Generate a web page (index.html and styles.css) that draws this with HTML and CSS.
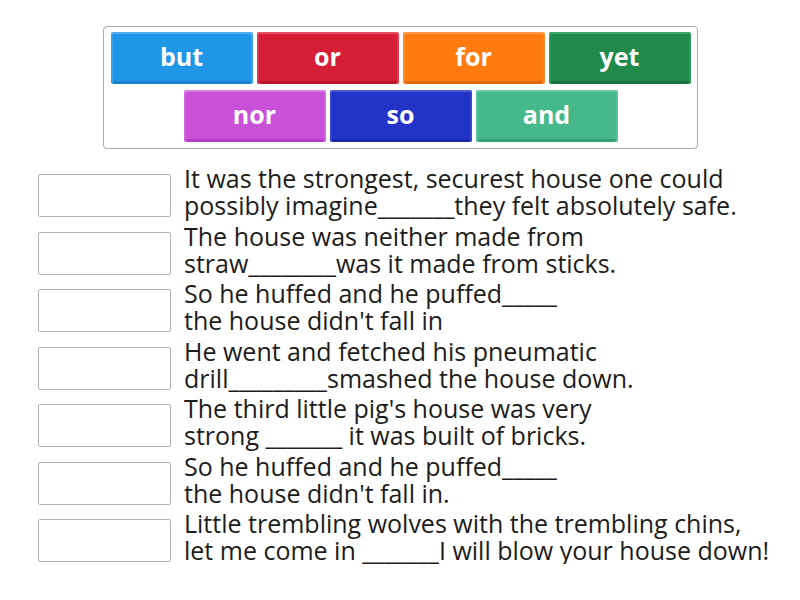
FILE: index.html
```html
<!DOCTYPE html>
<html>
<head>
<meta charset="utf-8">
<link rel="stylesheet" href="styles.css">
</head>
<body>
<div class="bank">
  <div class="tile blue">but</div>
  <div class="tile red">or</div>
  <div class="tile orange">for</div>
  <div class="tile green">yet</div>
  <div class="tile purple">nor</div>
  <div class="tile navy">so</div>
  <div class="tile teal">and</div>
</div>
<div class="rows">
  <div class="row"><div class="slot"></div><div class="text">It was the strongest, securest house one could<br>possibly imagine_______they felt absolutely safe.</div></div>
  <div class="row"><div class="slot"></div><div class="text">The house was neither made from<br>straw________was it made from sticks.</div></div>
  <div class="row"><div class="slot"></div><div class="text">So he huffed and he puffed_____<br>the house didn't fall in</div></div>
  <div class="row"><div class="slot"></div><div class="text">He went and fetched his pneumatic<br>drill_________smashed the house down.</div></div>
  <div class="row"><div class="slot"></div><div class="text">The third little pig's house was very<br>strong _______ it was built of bricks.</div></div>
  <div class="row"><div class="slot"></div><div class="text">So he huffed and he puffed_____<br>the house didn't fall in.</div></div>
  <div class="row"><div class="slot"></div><div class="text">Little trembling wolves with the trembling chins,<br>let me come in _______I will blow your house down!</div></div>
</div>
</body>
</html>
```
FILE: styles.css
```css
html, body {
  margin: 0;
  padding: 0;
  background: #fff;
  font-family: "Open Sans", "Liberation Sans", sans-serif;
}

.bank {
  box-sizing: border-box;
  width: 595px;
  margin: 26px 0 0 103px;
  padding: 5px 6px 6px;
  border: 1px solid #a9a9a9;
  border-radius: 4px;
  display: flex;
  flex-wrap: wrap;
  justify-content: center;
  column-gap: 4px;
  row-gap: 6px;
}

.tile {
  box-sizing: border-box;
  width: 142px;
  height: 52px;
  border-radius: 3px;
  color: #fff;
  font-weight: 700;
  font-size: 25px;
  display: flex;
  align-items: center;
  justify-content: center;
  padding-bottom: 5px;
}

.blue {
  background: #1f96e6;
  box-shadow: inset 0 2px 0 #52adef, inset 2px 0 0 #3aa2eb, inset -2px 0 0 #3aa2eb, inset 0 -3px 0 #1880cc;
}
.red {
  background: #d61f37;
  box-shadow: inset 0 2px 0 #e65064, inset 2px 0 0 #de3a4f, inset -2px 0 0 #de3a4f, inset 0 -3px 0 #b9162b;
}
.orange {
  background: #ff7b10;
  box-shadow: inset 0 2px 0 #ff9a48, inset 2px 0 0 #ff8a2c, inset -2px 0 0 #ff8a2c, inset 0 -3px 0 #e0680a;
}
.green {
  background: #1f8a4a;
  box-shadow: inset 0 2px 0 #3aa866, inset 2px 0 0 #2a9857, inset -2px 0 0 #2a9857, inset 0 -3px 0 #17733c;
}
.purple {
  background: #c951d8;
  box-shadow: inset 0 2px 0 #d87ee3, inset 2px 0 0 #d068dd, inset -2px 0 0 #d068dd, inset 0 -3px 0 #b53bc6;
}
.navy {
  background: #2233c8;
  box-shadow: inset 0 2px 0 #4b5ad8, inset 2px 0 0 #3546d0, inset -2px 0 0 #3546d0, inset 0 -3px 0 #1826a8;
}
.teal {
  background: #45b98b;
  box-shadow: inset 0 2px 0 #6cc9a3, inset 2px 0 0 #56c096, inset -2px 0 0 #56c096, inset 0 -3px 0 #36a076;
}

.rows {
  margin: 16px 0 0 38px;
  display: flex;
  flex-direction: column;
  row-gap: 3.5px;
}

.row {
  display: flex;
  align-items: flex-start;
  height: 54px;
}

.slot {
  box-sizing: border-box;
  width: 133px;
  height: 43px;
  margin-top: 9px;
  border: 1px solid #b3b3b3;
  border-radius: 2px;
  flex: none;
}

.text {
  margin-left: 13px;
  font-size: 25px;
  line-height: 27px;
  color: #1c1c1c;
  white-space: nowrap;
}
```
